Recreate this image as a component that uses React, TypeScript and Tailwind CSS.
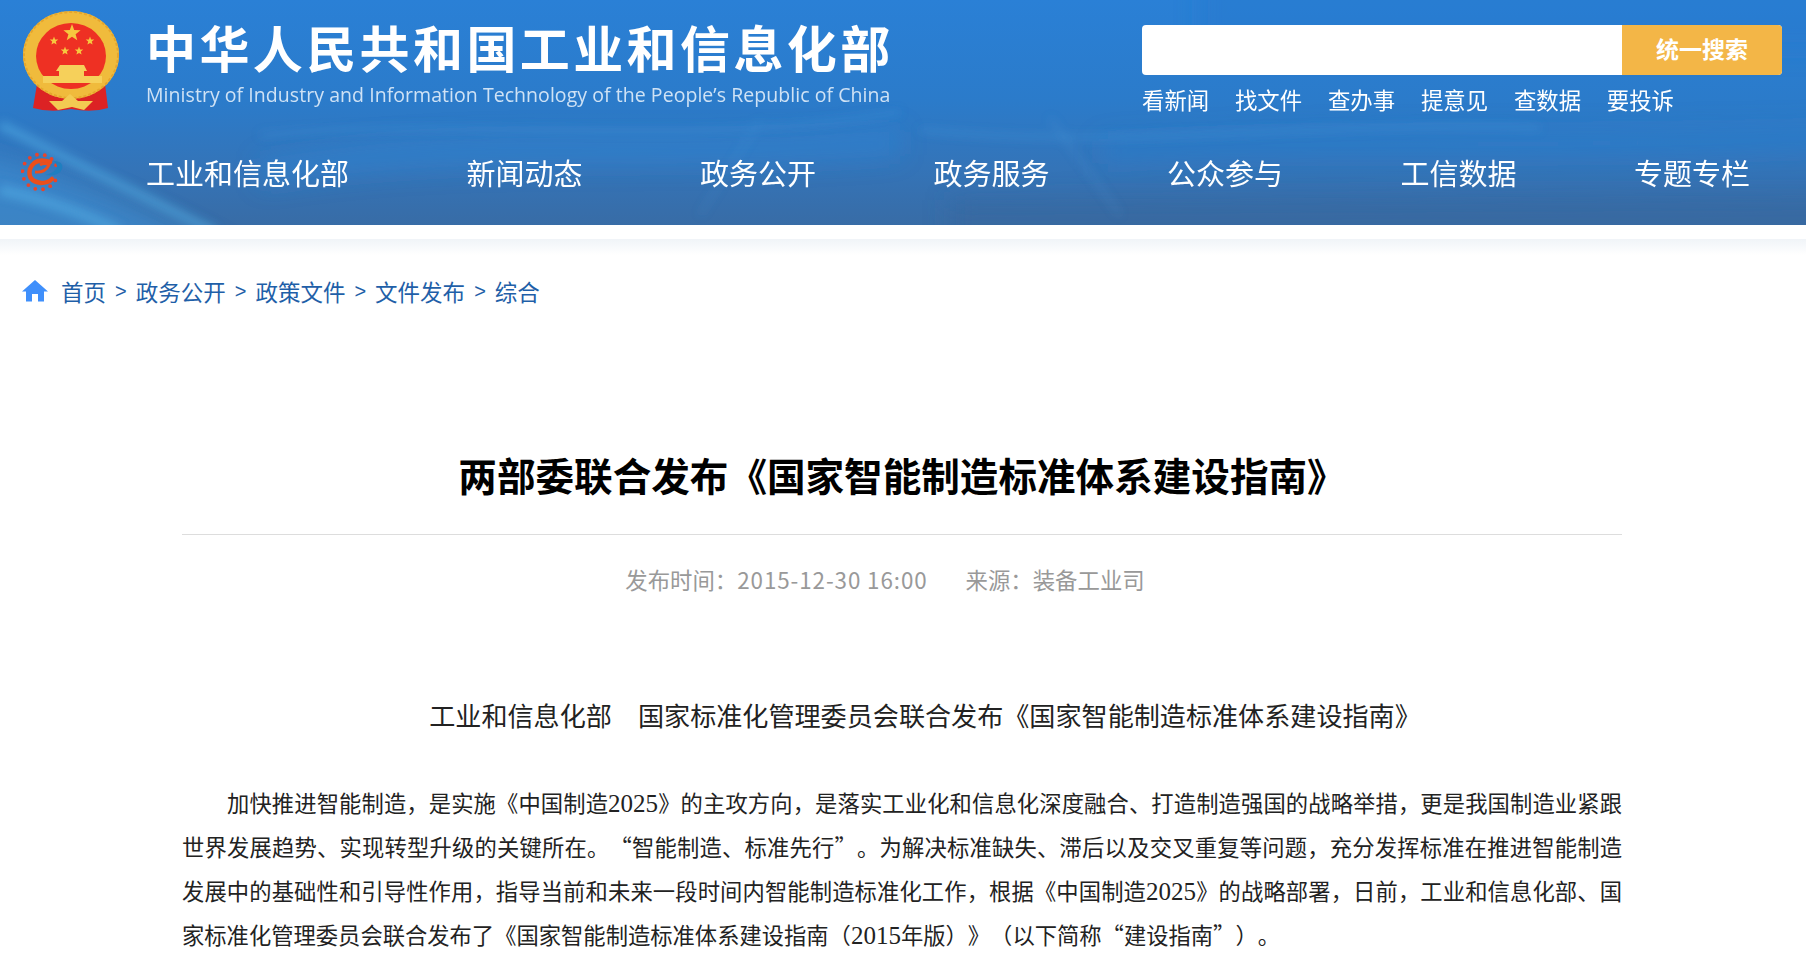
import React from 'react';

const NAV = ['工业和信息化部', '新闻动态', '政务公开', '政务服务', '公众参与', '工信数据', '专题专栏'];
const QUICK = ['看新闻', '找文件', '查办事', '提意见', '查数据', '要投诉'];
const CRUMBS = ['政务公开', '政策文件', '文件发布', '综合'];

const star = (cx: number, cy: number, r: number) => {
    const pts: string[] = [];
    for (let i = 0; i < 10; i++) {
        const rad = i % 2 === 0 ? r : r * 0.42;
        const a = -Math.PI / 2 + (i * Math.PI) / 5;
        pts.push(`${(cx + rad * Math.cos(a)).toFixed(1)},${(cy + rad * Math.sin(a)).toFixed(1)}`);
    }
    return pts.join(' ');
};

const HeaderBackground = () => (
    <svg className="absolute inset-0 h-full w-full" viewBox="0 0 1806 225" preserveAspectRatio="none">
        <defs>
            <linearGradient id="hdr" x1="0" y1="0" x2="0" y2="1">
                <stop offset="0" stopColor="#2a80d6" />
                <stop offset="0.45" stopColor="#2b7bca" />
                <stop offset="0.75" stopColor="#3474b8" />
                <stop offset="1" stopColor="#386ca6" />
            </linearGradient>
            <filter id="soft" filterUnits="userSpaceOnUse" x="-100" y="-100" width="2006" height="425"><feGaussianBlur stdDeviation="12" /></filter>
            <filter id="thin" filterUnits="userSpaceOnUse" x="-100" y="-100" width="2006" height="425"><feGaussianBlur stdDeviation="5" /></filter>
        </defs>
        <rect width="1806" height="225" fill="url(#hdr)" />
        <g filter="url(#soft)">
            <path d="M-40 150 C60 175 150 205 240 260 L-40 260 Z" fill="#3f98dd" opacity="0.55" />
            <path d="M260 160 C480 120 640 150 900 130 L900 155 C640 175 480 150 260 185 Z" fill="#2f8adb" opacity="0.4" />
            <path d="M1100 165 C1300 150 1500 165 1860 150 L1860 125 C1500 135 1300 125 1100 140 Z" fill="#2c85d8" opacity="0.35" />
            <path d="M950 200 L1860 195 L1860 260 L950 260 Z" fill="#35659c" opacity="0.5" />
            <path d="M1200 -30 L1860 -30 L1860 50 L1200 50 Z" fill="#2678cc" opacity="0.4" />
        </g>
        <g filter="url(#thin)" fill="none">
            <path d="M0 125 C70 160 150 200 215 232" stroke="#58b8ee" strokeWidth="9" opacity="0.5" />
            <path d="M0 190 C40 198 90 215 120 232" stroke="#5cbcf0" strokeWidth="10" opacity="0.45" />
            <path d="M260 135 C460 115 680 150 900 112" stroke="#4aa2e6" strokeWidth="3" opacity="0.4" />
            <path d="M920 130 C1120 150 1320 120 1540 128" stroke="#4aa2e6" strokeWidth="4" opacity="0.35" />
            <path d="M1050 118 L1120 215" stroke="#5aaae6" strokeWidth="3" opacity="0.25" />
            <path d="M760 120 L700 215" stroke="#5aaae6" strokeWidth="3" opacity="0.2" />
        </g>
    </svg>
);

const Emblem = () => (
    <svg width="98" height="101" viewBox="22 11 98 101" className="shrink-0">
        <path d="M37 84 L33 108 Q50 113 71 109 Q92 113 108 108 L105 84 Z" fill="#dc2224" />
        <ellipse cx="71" cy="55" rx="48" ry="44" fill="#f0bb3c" />
        <ellipse cx="71" cy="55" rx="47" ry="43" fill="none" stroke="#e6a52c" strokeWidth="2" strokeDasharray="3 2" />
        <ellipse cx="71" cy="56" rx="35" ry="33" fill="#ee3023" />
        <polygon points={star(72, 33, 9)} fill="#f6c83f" />
        <polygon points={star(54, 41, 4.5)} fill="#f6c83f" />
        <polygon points={star(90, 41, 4.5)} fill="#f6c83f" />
        <polygon points={star(65, 51, 4.5)} fill="#f6c83f" />
        <polygon points={star(79, 51, 4.5)} fill="#f6c83f" />
        <path d="M60 65 L84 65 L87 71 L84 71 L84 76 L102 76 L102 83 L43 83 L43 76 L59 76 L59 71 L56 71 Z" fill="#f6d05a" />
        <path d="M49 101 L62 101 L70 94 L78 101 L93 101 L84 110 L72 107 L58 110 Z" fill="#f3cb52" />
    </svg>
);

const MiitLogo = () => (
    <svg width="46" height="42" viewBox="0 0 46 42" className="ml-[1px] shrink-0">
        {Array.from({ length: 14 }).map((_, i) => {
            const a = (i / 14) * Math.PI * 2 + 0.5;
            if (a > 5.9) return null;
            return <circle key={i} cx={19 + 17.5 * Math.cos(a)} cy={21 + 17.5 * Math.sin(a)} r="1.9" fill="#e8442a" />;
        })}
        <path d="M29 11 Q14 6 9 18 Q6 30 20 32 Q27 32 31 28" fill="none" stroke="#ea4f1c" strokeWidth="4.5" strokeLinecap="round" />
        <path d="M14 21 Q24 22 28 14 Q24 11 19 14" fill="none" stroke="#ea4f1c" strokeWidth="2.8" />
        <path d="M32 10 Q43 10 41 18 Q38 26 24 24 Q34 22 36 16 Q36 12 32 10 Z" fill="#1f7fc0" />
    </svg>
);

const HomeIcon = () => (
    <svg width="26" height="22" viewBox="0 0 26 22" className="shrink-0">
        <path d="M13 0 L26 11.5 L22 11.5 L22 21.5 L16 21.5 L16 14 L10 14 L10 21.5 L4 21.5 L4 11.5 L0 11.5 Z" fill="#3f8ffb" />
    </svg>
);

// 正文里的数字是宋体配 Times 的样子
const Num = ({ children }: { children: React.ReactNode }) => (
    <span className="font-['Liberation_Serif',serif] text-[25px] leading-none">{children}</span>
);

const justified = "block [text-align-last:justify]";

export default function App() {
    return (
        <div className="h-[980px] overflow-hidden bg-white font-['Noto_Sans_CJK_SC','Noto_Sans',sans-serif]">
            <header className="relative h-[225px] text-white">
                <HeaderBackground />
                <div className="relative flex h-[135px] justify-between pl-[22px] pr-[24px]">
                    <div className="flex pt-[11px]">
                        <Emblem />
                        <div className="ml-[26px]">
                            <h1 className="mt-[5px] h-[60px] whitespace-nowrap text-[50px] leading-[60px] font-bold tracking-[3.4px]">中华人民共和国工业和信息化部</h1>
                            <p className="mt-[6px] whitespace-nowrap font-['Open_Sans',sans-serif] text-[19.5px] leading-[26px] tracking-[0.05px] text-[#cfe2f5]">Ministry of Industry and Information Technology of the People’s Republic of China</p>
                        </div>
                    </div>
                    <div className="w-[640px] pt-[25px]">
                        <div className="flex h-[50px] overflow-hidden rounded-[4px] bg-white">
                            <div className="flex-1" />
                            <div className="flex w-[160px] items-center justify-center bg-[#f3b647] pb-[3px] text-[23px] font-bold">统一搜索</div>
                        </div>
                        <div className="mt-[8px] flex gap-[25.8px] text-[22.4px] leading-[32px] text-white">
                            {QUICK.map((q) => (
                                <span key={q}>{q}</span>
                            ))}
                        </div>
                    </div>
                </div>
                <nav className="relative flex h-[74px] items-center pl-[20px]">
                    <MiitLogo />
                    <div className="ml-[79px] flex gap-[117.5px] text-[29px] leading-[40px]">
                        {NAV.map((n) => (
                            <span key={n} className="whitespace-nowrap">{n}</span>
                        ))}
                    </div>
                </nav>
            </header>

            <div className="h-[14px] bg-white" />
            <div className="h-[16px] bg-gradient-to-b from-[#f0f4f8] to-white" />

            <div className="mt-[21px] flex items-center pl-[22px] text-[22.5px] leading-[30px] text-[#1f5fa8]">
                <HomeIcon />
                <span className="ml-[13px]">首页</span>
                {CRUMBS.map((c) => (
                    <React.Fragment key={c}>
                        <span className="mx-[9px] font-['Liberation_Sans',sans-serif] text-[20px]">&gt;</span>
                        <span>{c}</span>
                    </React.Fragment>
                ))}
            </div>

            <main className="mx-[182px] w-[1440px]">
                <h2 className="mt-[143px] border-b border-[#dddddd] pb-[35px] text-center text-[38.6px] leading-[50px] font-bold text-black">
                    两部委联合发布《国家智能制造标准体系建设指南》
                </h2>
                <div className="mt-[29px] flex justify-center gap-[38px] pr-[34px] text-[22.4px] leading-[30px] text-[#999999]">
                    <span>发布时间：<span className="tracking-[0.9px]">2015-12-30 16:00</span></span>
                    <span>来源：装备工业司</span>
                </div>
                <div className="text-[22.3px] leading-[44px] text-[#222222] [text-spacing-trim:space-all]">
                    <p className="mt-[99px] pl-[46px] text-center text-[26.1px]">工业和信息化部　国家标准化管理委员会联合发布《国家智能制造标准体系建设指南》</p>
                    <p className="mt-[43px]">
                        <span className={`${justified} indent-[45px]`}>加快推进智能制造，是实施《中国制造<Num>2025</Num>》的主攻方向，是落实工业化和信息化深度融合、打造制造强国的战略举措，更是我国制造业紧跟</span>
                        <span className={justified}>世界发展趋势、实现转型升级的关键所在。“智能制造、标准先行”。为解决标准缺失、滞后以及交叉重复等问题，充分发挥标准在推进智能制造</span>
                        <span className={justified}>发展中的基础性和引导性作用，指导当前和未来一段时间内智能制造标准化工作，根据《中国制造<Num>2025</Num>》的战略部署，日前，工业和信息化部、国</span>
                        <span className="block">家标准化管理委员会联合发布了《国家智能制造标准体系建设指南（<Num>2015</Num>年版）》（以下简称“建设指南”）。</span>
                    </p>
                </div>
            </main>
        </div>
    );
}
